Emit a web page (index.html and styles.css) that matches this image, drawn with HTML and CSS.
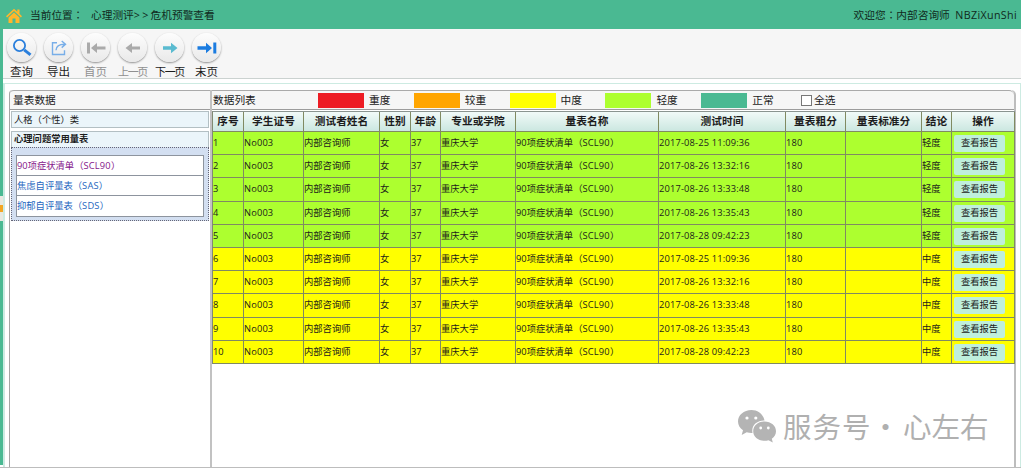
FILE: index.html
```html
<!DOCTYPE html>
<html>
<head>
<meta charset="utf-8">
<title>危机预警查看</title>
<link rel="stylesheet" href="styles.css">
</head>
<body>
<header class="topbar">
  <svg class="home" viewBox="0 0 16 16"><path fill="#ffb62b" d="M8 .8 0 8.2l1.1 1.2L8 3.1l6.9 6.3L16 8.2l-2.5-2.4V1.6h-2.2v2.1zM8 4.5 2.5 9.5V15h4v-4.5h3V15h4V9.5z"/></svg>
  <span class="where">当前位置<span class="p" lang="zh-TW">：</span></span>
  <span class="crumb">心理测评<span class="gt">&gt;&gt;</span>危机预警查看</span>
  <span class="welcome">欢迎您<span class="p" lang="zh-TW">：</span>内部咨询师&nbsp; <span class="user">NBZiXunShi</span></span>
</header>
<div class="shell">
  <nav class="toolbar">
    <a class="tool"><span class="disc"><svg viewBox="0 0 20 20" fill="none" stroke="#2a7fdc"><circle cx="7.500" cy="7.500" r="5.600" stroke-width="1.800"/><path d="m12.200 11.800 6.300 5" stroke-width="3"/></svg></span><span class="label">查询</span></a>
    <a class="tool"><span class="disc"><svg viewBox="0 0 20 20" fill="none" stroke="#78aee8" stroke-width="1.4"><path d="M8 4.700H3.500v11.800h12v-4.300M7 12.300c.2-4 2.500-6 8.500-6M12.700 3l3.800 3.300-3.800 3.300"/></svg></span><span class="label">导出</span></a>
    <a class="tool off"><span class="disc"><svg viewBox="0 0 20 20" fill="#aaa"><path d="M1 4.500h3v11H1zM5 10l6-5v3.500h8.500v3H11V15z"/></svg></span><span class="label">首页</span></a>
    <a class="tool off"><span class="disc"><svg viewBox="0 0 20 20" fill="#aaa"><path d="m2.500 10 6.500-5v3.500h8v3H9V15z"/></svg></span><span class="label three">上一页</span></a>
    <a class="tool"><span class="disc"><svg viewBox="0 0 20 20" fill="#5abbd0"><path d="M17.500 10 11 4.700v3.600H3v3.400h8v3.600z"/></svg></span><span class="label three">下一页</span></a>
    <a class="tool"><span class="disc"><svg viewBox="0 0 20 20" fill="#1b7ce0"><path d="M15 10 9 4.700v3.600H.5v3.400H9v3.600zM16.300 4.500h3v11h-3z"/></svg></span><span class="label">末页</span></a>
  </nav>
  <main class="work">
    <section class="side">
      <h2 class="head">量表数据</h2>
      <div class="group">人格<span class="p" lang="zh-TW">（</span>个性<span class="p" lang="zh-TW">）</span>类</div>
      <div class="group open">心理问题常用量表</div>
      <div class="scales">
        <ul class="list">
          <li class="visited">90项症状清单<em class="p" lang="zh-TW">（</em><em>SCL90</em><em class="p" lang="zh-TW">）</em></li>
          <li>焦虑自评量表<em class="p" lang="zh-TW">（</em><em>SAS</em><em class="p" lang="zh-TW">）</em></li>
          <li>抑郁自评量表<em class="p" lang="zh-TW">（</em><em>SDS</em><em class="p" lang="zh-TW">）</em></li>
        </ul>
      </div>
    </section>
    <section class="data">
      <div class="head legend">
        <span class="title">数据列表</span>
        <span class="key"><i class="red"></i>重度</span>
        <span class="key"><i class="orange"></i>较重</span>
        <span class="key"><i class="yellow"></i>中度</span>
        <span class="key"><i class="lime"></i>轻度</span>
        <span class="key"><i class="green"></i>正常</span>
        <span class="all"><b class="box"></b>全选</span>
      </div>
      <div class="table">
        <div class="row th"><span>序号</span><span>学生证号</span><span>测试者姓名</span><span>性别</span><span>年龄</span><span>专业或学院</span><span>量表名称</span><span>测试时间</span><span>量表粗分</span><span>量表标准分</span><span>结论</span><span>操作</span></div>
        <div class="row lime"><span>1</span><span class="ls">No003</span><span>内部咨询师</span><span>女</span><span>37</span><span>重庆大学</span><span>90项症状清单<em class="p" lang="zh-TW">（</em><em>SCL90</em><em class="p" lang="zh-TW">）</em></span><span class="ls">2017-08-25 11:09:36</span><span class="ls">180</span><span></span><span>轻度</span><span><a class="btn">查看报告</a></span></div>
        <div class="row lime"><span>2</span><span class="ls">No003</span><span>内部咨询师</span><span>女</span><span>37</span><span>重庆大学</span><span>90项症状清单<em class="p" lang="zh-TW">（</em><em>SCL90</em><em class="p" lang="zh-TW">）</em></span><span class="ls">2017-08-26 13:32:16</span><span class="ls">180</span><span></span><span>轻度</span><span><a class="btn">查看报告</a></span></div>
        <div class="row lime"><span>3</span><span class="ls">No003</span><span>内部咨询师</span><span>女</span><span>37</span><span>重庆大学</span><span>90项症状清单<em class="p" lang="zh-TW">（</em><em>SCL90</em><em class="p" lang="zh-TW">）</em></span><span class="ls">2017-08-26 13:33:48</span><span class="ls">180</span><span></span><span>轻度</span><span><a class="btn">查看报告</a></span></div>
        <div class="row lime"><span>4</span><span class="ls">No003</span><span>内部咨询师</span><span>女</span><span>37</span><span>重庆大学</span><span>90项症状清单<em class="p" lang="zh-TW">（</em><em>SCL90</em><em class="p" lang="zh-TW">）</em></span><span class="ls">2017-08-26 13:35:43</span><span class="ls">180</span><span></span><span>轻度</span><span><a class="btn">查看报告</a></span></div>
        <div class="row lime"><span>5</span><span class="ls">No003</span><span>内部咨询师</span><span>女</span><span>37</span><span>重庆大学</span><span>90项症状清单<em class="p" lang="zh-TW">（</em><em>SCL90</em><em class="p" lang="zh-TW">）</em></span><span class="ls">2017-08-28 09:42:23</span><span class="ls">180</span><span></span><span>轻度</span><span><a class="btn">查看报告</a></span></div>
        <div class="row yellow"><span>6</span><span class="ls">No003</span><span>内部咨询师</span><span>女</span><span>37</span><span>重庆大学</span><span>90项症状清单<em class="p" lang="zh-TW">（</em><em>SCL90</em><em class="p" lang="zh-TW">）</em></span><span class="ls">2017-08-25 11:09:36</span><span class="ls">180</span><span></span><span>中度</span><span><a class="btn">查看报告</a></span></div>
        <div class="row yellow"><span>7</span><span class="ls">No003</span><span>内部咨询师</span><span>女</span><span>37</span><span>重庆大学</span><span>90项症状清单<em class="p" lang="zh-TW">（</em><em>SCL90</em><em class="p" lang="zh-TW">）</em></span><span class="ls">2017-08-26 13:32:16</span><span class="ls">180</span><span></span><span>中度</span><span><a class="btn">查看报告</a></span></div>
        <div class="row yellow"><span>8</span><span class="ls">No003</span><span>内部咨询师</span><span>女</span><span>37</span><span>重庆大学</span><span>90项症状清单<em class="p" lang="zh-TW">（</em><em>SCL90</em><em class="p" lang="zh-TW">）</em></span><span class="ls">2017-08-26 13:33:48</span><span class="ls">180</span><span></span><span>中度</span><span><a class="btn">查看报告</a></span></div>
        <div class="row yellow"><span>9</span><span class="ls">No003</span><span>内部咨询师</span><span>女</span><span>37</span><span>重庆大学</span><span>90项症状清单<em class="p" lang="zh-TW">（</em><em>SCL90</em><em class="p" lang="zh-TW">）</em></span><span class="ls">2017-08-26 13:35:43</span><span class="ls">180</span><span></span><span>中度</span><span><a class="btn">查看报告</a></span></div>
        <div class="row yellow"><span>10</span><span class="ls">No003</span><span>内部咨询师</span><span>女</span><span>37</span><span>重庆大学</span><span>90项症状清单<em class="p" lang="zh-TW">（</em><em>SCL90</em><em class="p" lang="zh-TW">）</em></span><span class="ls">2017-08-28 09:42:23</span><span class="ls">180</span><span></span><span>中度</span><span><a class="btn">查看报告</a></span></div>
      </div>
    </section>
  </main>
</div>
<div class="handle"></div>
<div class="mark">
  <svg viewBox="0 0 40 34"><path fill="#b4b4b4" d="M14.500 1C6.700 1 1 6.200 1 12.500c0 3.600 1.900 6.700 5 8.800L4.700 26l5-2.700c1.600.5 3.200.7 4.800.7h1C14 16.500 20 11.600 27.500 11.600 26.300 5.200 20.700 1 14.500 1z"/><path fill="#b4b4b4" d="M27.500 12.600c-6.500 0-11.300 4.300-11.300 9.600S21 31.800 27.500 31.800c1.400 0 2.800-.2 4-.6l4.300 2.300-1-3.800c2.600-1.800 4.200-4.400 4.200-7.500 0-5.300-5-9.600-11.500-9.600z"/><g fill="#fff"><circle cx="10" cy="9" r="1.600"/><circle cx="18.800" cy="9" r="1.600"/><circle cx="23.700" cy="19" r="1.400"/><circle cx="31.300" cy="19" r="1.400"/></g></svg>
  <span class="svc">服务号</span><span class="dot">·</span><span class="name">心左右</span>
</div>
</body>
</html>
```
FILE: styles.css
```css
* { box-sizing: border-box; }
body {
  margin: 0;
  width: 1021px;
  height: 468px;
  overflow: hidden;
  position: relative;
  background: #fff;
  border-bottom: 1px solid #bdbdbd;
  color: #1c1c1c;
  font: 9.3px/1 "Open Sans", "Noto Sans CJK SC", sans-serif;
  white-space: nowrap;
}
em { font-style: normal; letter-spacing: .2px; }
.p { font-family: "Open Sans", "Noto Sans CJK TC", sans-serif; letter-spacing: 0; }
.ls { letter-spacing: .16px; }

.topbar {
  display: flex;
  align-items: center;
  height: 29px;
  padding: 2px 4px 0 6px;
  background: #4ab992;
  font-size: 10.7px;
  color: #102a20;
}
.home { width: 16px; height: 16px; margin-right: 8px; }
.where { width: 61px; }
.gt { letter-spacing: 2.3px; }
.welcome { margin-left: auto; }
.user { letter-spacing: .35px; }

.shell {
  height: 436px;
  border-left: 3px solid #4ab992;
}
.toolbar {
  display: flex;
  height: 50px;
  background: #f6f6f6;
  border-bottom: 1px solid #cbd2d0;
}
.tool {
  width: 37px;
  display: flex;
  flex-direction: column;
  align-items: center;
  padding-top: 4px;
}
.disc {
  width: 29px;
  height: 29px;
  border-radius: 50%;
  background: linear-gradient(#fdfdfd, #e9e9e9);
  box-shadow: 0 1px 2px #8e8e8e;
  display: flex;
  align-items: center;
  justify-content: center;
}
.disc svg { width: 20px; height: 20px; }
.label { margin-top: 4px; font-size: 11.5px; line-height: 12px; }
.three { letter-spacing: -1.3px; font-size: 11px; }
.off .label { color: #909090; }

.work {
  display: flex;
  margin-top: 4px;
  height: 384px;
  padding: 6px 4px 0 4px;
  border: 1px solid #cdebe2;
  border-width: 1px 1px 0 2px;
}
.head {
  margin: 0;
  height: 20px;
  background: #f6f6f6;
  border-top: 1px solid #aaa;
  border-bottom: 1px solid #9c9c9c;
  font-size: 10.7px;
  line-height: 18px;
  font-weight: 400;
}
.side {
  width: 201px;
  border-left: 1px solid #a5a5a5;
  border-top-left-radius: 4px;
}
.side .head { padding-left: 3px; border-top-left-radius: 4px; }
.group {
  margin: 1px 1px 0 1px;
  height: 17px;
  padding-left: 2px;
  border: 1px solid #b3bfc3;
  background: #ebf5fa;
  line-height: 15px;
}
.group.open {
  margin-top: 3px;
  height: 16px;
  border-bottom: 0;
  font-weight: 700;
  line-height: 14px;
}
.scales {
  margin: 0 1px;
  height: 74px;
  padding: 7px 4px 0 4px;
  background: #d3dff1;
  border: 1px dotted #667;
}
.list {
  margin: 0;
  padding: 0;
  list-style: none;
  border: 1px solid #8d949e;
  background: #fff;
  color: #1e66c0;
}
.list li { height: 20px; line-height: 19px; border-bottom: 1px solid #8d949e; }
.list li:last-child { border-bottom: 0; }
.list .visited { color: #85148a; }

.data {
  width: 806px;
  border-left: 2px solid #c2c2c2;
  border-right: 2px solid #bdbdbd;
  border-top-right-radius: 5px;
}
.data .head { border-top-right-radius: 5px; }
.legend { display: flex; align-items: center; padding-left: 1px; }
.title { width: 105px; }
.key { width: 95.8px; display: flex; align-items: center; }
.key i { width: 46px; height: 15px; margin-right: 5px; }
.red { background: #ed1c24; }
.orange { background: #ffa500; }
.yellow { background: #ff0; }
.lime { background: #adff2f; }
.green { background: #4ab992; }
.all { display: flex; align-items: center; margin-left: 4px; }
.box { width: 11px; height: 11px; border: 1px solid #777; background: #fff; margin-right: 2px; }

.table { margin-top: 1px; border-left: 1px solid #808a72; border-top: 1px solid #8a9490; width: 803px; }
.row {
  display: grid;
  grid-template-columns: 31px 60px 76px 31px 30px 75px 143px 127px 60px 76px 30px 63px;
  height: 23.2px;
}
.row > span {
  border-right: 1px solid #808a62;
  border-bottom: 1px solid #808a62;
  line-height: 22px;
  height: 100%;
}
.row.th {
  height: 20px;
  background: linear-gradient(#f1faf8, #c9e6df);
  font-size: 10.7px;
  font-weight: 700;
  text-align: center;
}
.row.th > span { line-height: 19px; }
.btn {
  display: block;
  width: 51px;
  height: 17px;
  margin: 3px 0 0 2px;
  border-radius: 2px;
  background: #bfefdc;
  line-height: 16px;
  text-align: center;
}

.handle {
  position: absolute;
  left: 0;
  top: 196px;
  width: 3px;
  height: 25px;
  background: linear-gradient(#e8e8e0 38%, #f3a623 38% 64%, #e8e8e0 64%);
}
.mark {
  position: absolute;
  left: 737px;
  top: 408px;
  display: flex;
  align-items: center;
  height: 35px;
  color: #b0b0b0;
  font: 28.5px/35px "Noto Sans CJK SC", sans-serif;
}
.mark svg { width: 40px; height: 34px; margin-right: 6px; }
.svc { width: 89px; letter-spacing: 1px; }
.dot { width: 31px; text-align: center; text-indent: -4px; }
```
